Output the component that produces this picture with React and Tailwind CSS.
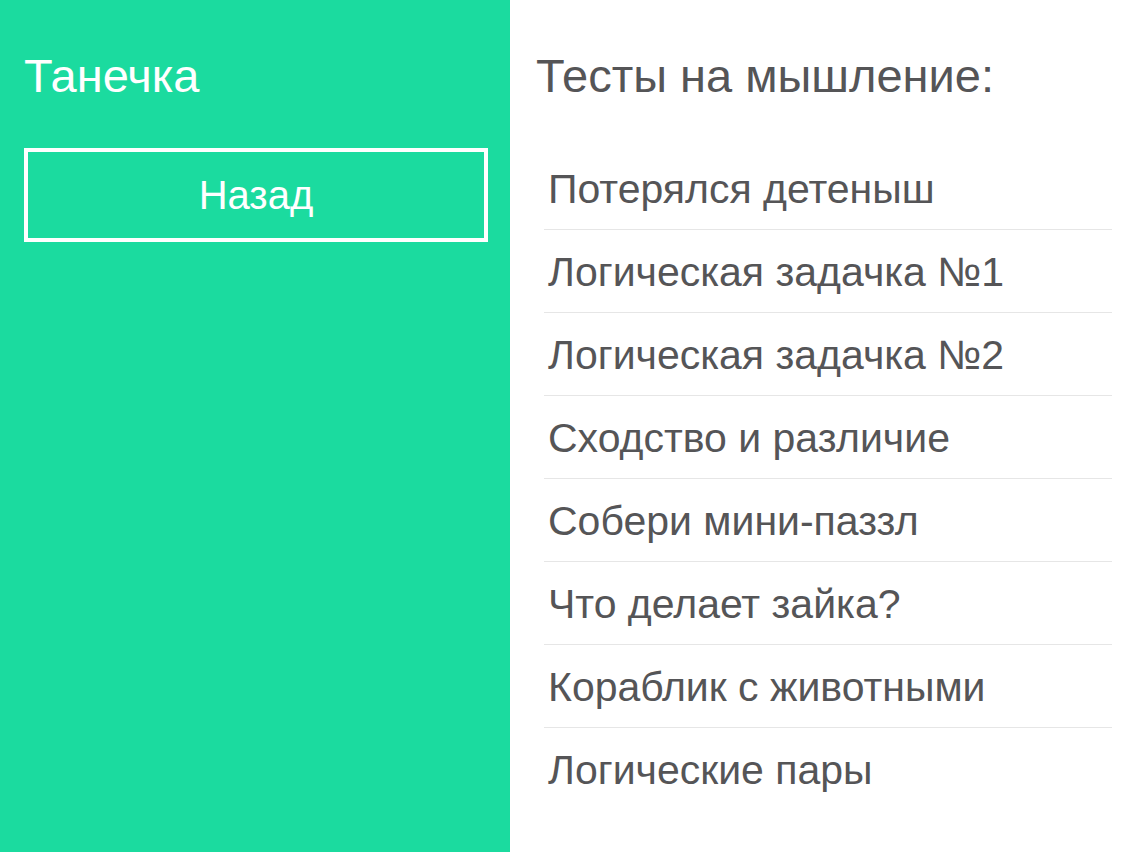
const tests = [
  "Потерялся детеныш",
  "Логическая задачка №1",
  "Логическая задачка №2",
  "Сходство и различие",
  "Собери мини-паззл",
  "Что делает зайка?",
  "Кораблик с животными",
  "Логические пары",
];

export default function App() {
  return (
    <div
      className="flex h-[852px] w-[1136px] overflow-hidden bg-white"
      style={{ fontFamily: '"Liberation Sans", Arial, sans-serif' }}
    >
      {/* Sidebar */}
      <div className="flex w-[510px] shrink-0 flex-col bg-[#1bdb9f] px-6 pt-[52px]">
        <h1 className="text-[47px] leading-none font-normal text-white">Танечка</h1>
        <button className="mt-[49px] flex h-[94px] w-[464px] items-center justify-center border-4 border-white text-[40px] leading-none text-white">
          Назад
        </button>
      </div>

      {/* Tests list */}
      <div className="flex flex-1 flex-col pt-[52px] pl-[26px] pr-6">
        <h2 className="text-[47px] leading-none font-normal text-[#555557]">Тесты на мышление:</h2>
        <ul className="mt-[48px] ml-2">
          {tests.map((t, i) => (
            <li
              key={t}
              className={
                "flex h-[83px] items-center pt-[2px] text-[41px] leading-none text-[#555557] " +
                (i < tests.length - 1 ? "border-b border-[#e6e6e6]" : "")
              }
            >
              <span className="pl-[4px]">{t}</span>
            </li>
          ))}
        </ul>
      </div>
    </div>
  );
}
